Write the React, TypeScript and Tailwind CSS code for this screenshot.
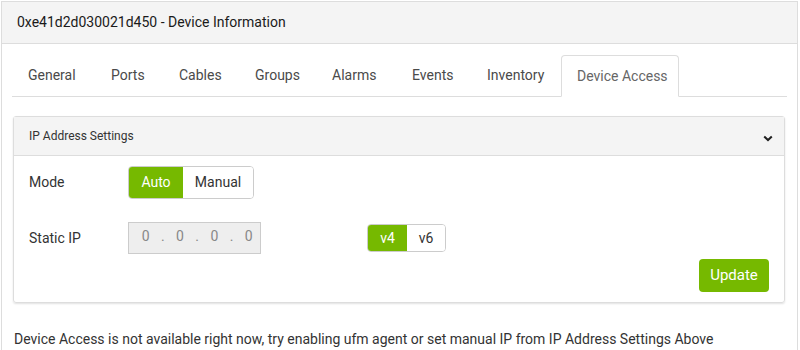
const tabs = [
  { label: 'General', w: 'w-[83px]' },
  { label: 'Ports', w: 'w-[68px]' },
  { label: 'Cables', w: 'w-[76px]' },
  { label: 'Groups', w: 'w-[77px]' },
  { label: 'Alarms', w: 'w-[80px]' },
  { label: 'Events', w: 'w-[75px]' },
  { label: 'Inventory', w: 'w-[90px]' },
];

const ipParts = ['0', '.', '0', '.', '0', '.', '0'];

export default function App() {
  return (
    <div className="h-[350px] w-[800px] overflow-hidden bg-white font-['Roboto',sans-serif] text-[#333]">
      {/* Device card */}
      <div className="ml-[1px] mr-[2px] mt-[1px] border-x border-t border-[#ddd]">
        <div className="flex h-[42px] items-center border-b border-[#ddd] bg-[#f4f4f4] px-[15px] text-[14px] text-[#1a1a1a]">
          0xe41d2d030021d450 - Device Information
        </div>

        <div className="px-[10px] pb-[20px]">
          {/* Tabs */}
          <div className="mt-[11px] flex h-[42px] border-b border-[#ddd]">
            {tabs.map((t) => (
              <div
                key={t.label}
                className={`${t.w} flex h-[41px] items-center pl-[16px] text-[14px] text-[#4a4a4a]`}
              >
                {t.label}
              </div>
            ))}
            <div className="-mb-px flex h-[42px] w-[118px] items-center rounded-t-[4px] border border-b-white border-[#ddd] bg-white pl-[15px] text-[14px] text-[#666]">
              Device Access
            </div>
          </div>

          {/* IP Address Settings panel */}
          <div className="mx-px mr-[2px] mt-[19px] rounded-[3px] border border-[#ddd] shadow-[0_1px_2px_rgba(0,0,0,0.12)]">
            <div className="flex h-[39px] items-center justify-between border-b border-[#ddd] bg-[#f4f4f4] pl-[15px] pr-[10px] text-[12px] text-[#333]">
              <span>IP Address Settings</span>
              <svg width="10" height="7" viewBox="0 0 10 7" className="mr-[1px] mt-[4px]">
                <path d="M1.2 1.4 L5 5 L8.8 1.4" fill="none" stroke="#1f1f1f" strokeWidth="2" />
              </svg>
            </div>

            <div className="px-[15px] pb-[10px] pt-[10px]">
              <div className="flex items-center">
                <span className="w-[99px] text-[14px]">Mode</span>
                <div className="flex h-[33px] overflow-hidden rounded-[4px] border border-[#ccc] text-[14px]">
                  <span className="flex w-[54px] items-center justify-center bg-[#76b900] text-white">Auto</span>
                  <span className="flex w-[70px] items-center justify-center bg-white text-[#333]">Manual</span>
                </div>
              </div>

              <div className="mt-[23px] flex items-center">
                <span className="w-[99px] text-[14px]">Static IP</span>
                <div className="flex h-[32px] w-[133px] border border-[#ccc] bg-[#eeeeee] pl-[8px] pt-[3px] text-[14px] text-[#888]">
                  {ipParts.map((p, i) => (
                    <span key={i} className="w-[17.2px] text-center">
                      {p}
                    </span>
                  ))}
                </div>
                <div className="ml-[106px] flex h-[28px] overflow-hidden rounded-[4px] border border-[#ccc] text-[14px]">
                  <span className="flex w-[39px] items-center justify-center bg-[#76b900] text-white">v4</span>
                  <span className="flex w-[38px] items-center justify-center bg-white text-[#333]">v6</span>
                </div>
              </div>

              <div className="mt-[5px] flex justify-end pr-[-1px]">
                <button className="h-[33px] w-[70px] rounded-[4px] bg-[#76b900] text-[15px] text-white">
                  Update
                </button>
              </div>
            </div>
          </div>

          <div className="mt-[26px] pl-[2px] text-[14px] leading-[20px] text-[#333]">
            Device Access is not available right now, try enabling ufm agent or set manual IP from IP Address Settings Above
          </div>
        </div>
      </div>
    </div>
  );
}
